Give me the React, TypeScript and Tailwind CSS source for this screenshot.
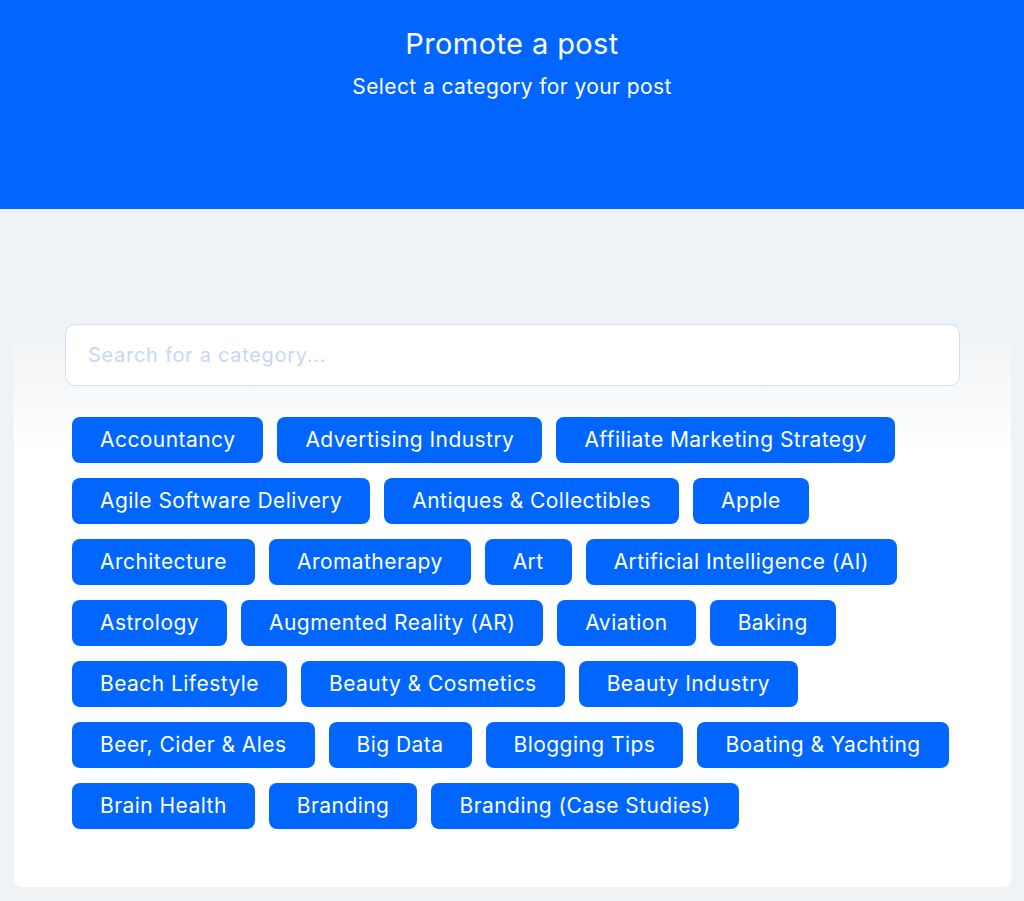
const categories = [
  'Accountancy',
  'Advertising Industry',
  'Affiliate Marketing Strategy',
  'Agile Software Delivery',
  'Antiques & Collectibles',
  'Apple',
  'Architecture',
  'Aromatherapy',
  'Art',
  'Artificial Intelligence (AI)',
  'Astrology',
  'Augmented Reality (AR)',
  'Aviation',
  'Baking',
  'Beach Lifestyle',
  'Beauty & Cosmetics',
  'Beauty Industry',
  'Beer, Cider & Ales',
  'Big Data',
  'Blogging Tips',
  'Boating & Yachting',
  'Brain Health',
  'Branding',
  'Branding (Case Studies)',
]

export default function App() {
  return (
    <div className="min-h-[901px] bg-[#f0f3f5] font-['Inter',sans-serif]">
      <header className="flex h-[209px] flex-col items-center bg-[#0066ff] pt-[26px] text-white">
        <h1 className="text-[29px] leading-[36px] tracking-[0.4px]">Promote a post</h1>
        <p className="mt-[12px] text-[21px] leading-[26px] tracking-[0.4px]">
          Select a category for your post
        </p>
      </header>

      <main className="ml-[14px] mr-[13px] mt-[36px] rounded-b-lg bg-gradient-to-b from-[#f0f3f5] from-[14%] to-white to-[32%] px-[51px] pb-[58px] pt-[79px]">
        <input
          type="text"
          placeholder="Search for a category..."
          className="h-[62px] w-full rounded-[10px] border border-[#cfe0fb] bg-white px-[22px] text-[20px] tracking-[0.7px] text-gray-700 outline-none placeholder:text-[#c6d8f4]"
        />
        <div className="mt-[31px] flex flex-wrap gap-x-[14px] gap-y-[15px] px-[7px]">
          {categories.map((c) => (
            <button
              key={c}
              className="h-[46px] rounded-lg bg-[#0066ff] px-[28px] text-[21px] tracking-[0.45px] text-white"
            >
              {c}
            </button>
          ))}
        </div>
      </main>
    </div>
  )
}
